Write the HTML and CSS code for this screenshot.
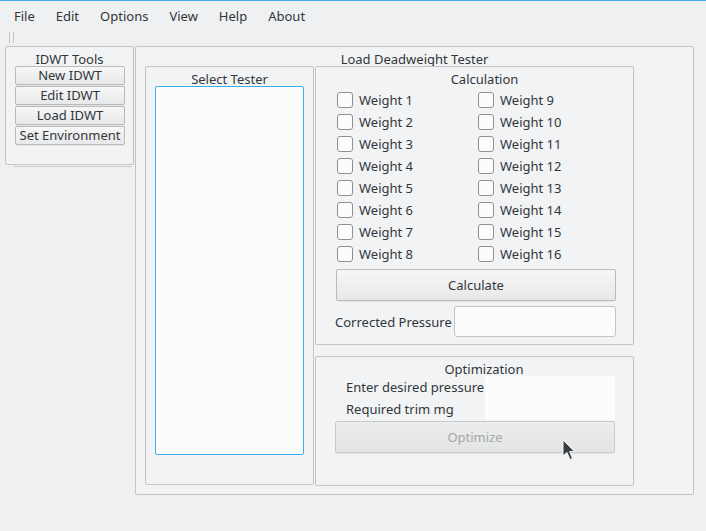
FILE: index.html
```html
<!DOCTYPE html>
<html>
<head>
<meta charset="utf-8">
<link rel="stylesheet" href="styles.css">
</head>
<body>
<div class="window">
  <div class="menubar">
    <span class="menu-item">File</span>
    <span class="menu-item">Edit</span>
    <span class="menu-item">Options</span>
    <span class="menu-item">View</span>
    <span class="menu-item">Help</span>
    <span class="menu-item">About</span>
  </div>
  <div class="toolbar"><span class="handle"></span></div>
  <div class="main">
    <div class="left-col">
      <div class="group tools">
        <div class="group-title">IDWT Tools</div>
        <div class="tool-buttons">
          <button class="btn tool-btn">New IDWT</button>
          <button class="btn tool-btn">Edit IDWT</button>
          <button class="btn tool-btn">Load IDWT</button>
          <button class="btn tool-btn">Set Environment</button>
        </div>
      </div>
      <div class="sep"></div>
    </div>
    <div class="group tester">
      <div class="group-title">Load Deadweight Tester</div>
      <div class="tester-row">
        <div class="group select">
          <div class="group-title">Select Tester</div>
          <div class="list"></div>
        </div>
        <div class="right-col">
          <div class="group calc">
            <div class="group-title">Calculation</div>
            <div class="weights">
              <label class="chk"><span class="box"></span>Weight 1</label>
              <label class="chk"><span class="box"></span>Weight 9</label>
              <label class="chk"><span class="box"></span>Weight 2</label>
              <label class="chk"><span class="box"></span>Weight 10</label>
              <label class="chk"><span class="box"></span>Weight 3</label>
              <label class="chk"><span class="box"></span>Weight 11</label>
              <label class="chk"><span class="box"></span>Weight 4</label>
              <label class="chk"><span class="box"></span>Weight 12</label>
              <label class="chk"><span class="box"></span>Weight 5</label>
              <label class="chk"><span class="box"></span>Weight 13</label>
              <label class="chk"><span class="box"></span>Weight 6</label>
              <label class="chk"><span class="box"></span>Weight 14</label>
              <label class="chk"><span class="box"></span>Weight 7</label>
              <label class="chk"><span class="box"></span>Weight 15</label>
              <label class="chk"><span class="box"></span>Weight 8</label>
              <label class="chk"><span class="box"></span>Weight 16</label>
            </div>
            <button class="btn big-btn calc-btn">Calculate</button>
            <div class="corrected">
              <span class="corr-label">Corrected Pressure</span>
              <span class="input"></span>
            </div>
          </div>
          <div class="group opt">
            <div class="group-title">Optimization</div>
            <div class="opt-form">
              <span class="opt-label">Enter desired pressure</span>
              <span class="opt-field"></span>
              <span class="opt-label">Required trim mg</span>
              <span class="opt-field"></span>
            </div>
            <button class="btn big-btn opt-btn" disabled>Optimize</button>
          </div>
        </div>
      </div>
    </div>
  </div>
  <svg class="cursor" width="14" height="22" viewBox="0 0 14 22">
    <path d="M1 1 L1 17 L5 13.5 L8 20.5 L10.5 19.5 L7.6 12.6 L12.5 12.6 Z" fill="#3a3d40" stroke="#f4f4f4" stroke-width="1" stroke-linejoin="round"/>
  </svg>
</div>
</body>
</html>
```

FILE: styles.css
```css
* {
  box-sizing: border-box;
}

html, body {
  margin: 0;
  padding: 0;
}

body {
  background: #eff0f1;
  font-family: "Noto Sans", "DejaVu Sans", sans-serif;
  font-size: 13px;
  color: #31363b;
  width: 706px;
  height: 531px;
  overflow: hidden;
}

.window {
  position: relative;
  width: 706px;
  height: 531px;
  border-top: 1px solid #3daee9;
}

.menubar {
  display: flex;
  height: 30px;
  line-height: 30px;
  padding-left: 3.5px;
}

.menu-item {
  padding: 0 10.5px;
}

.toolbar {
  height: 15px;
  padding: 1px 0 0 9px;
}

.handle {
  display: block;
  width: 5px;
  height: 11px;
  border-left: 1px solid #c3c4c5;
  border-right: 1px solid #c3c4c5;
}

.main {
  display: flex;
  align-items: flex-start;
  gap: 1px;
  padding-left: 5px;
}

.group {
  border: 1px solid #c3c4c6;
  border-radius: 2px;
  background: #f2f3f4;
}

.group-title {
  text-align: center;
  line-height: 19px;
  padding-top: 3px;
  margin-bottom: -3px;
  white-space: nowrap;
}

.left-col {
  width: 129px;
}

.tools {
  height: 119px;
}

.tool-buttons {
  display: flex;
  flex-direction: column;
  gap: 1px;
  padding-left: 9px;
}

.btn {
  font-family: inherit;
  font-size: 13px;
  color: #31363b;
  border: 1px solid #b9babc;
  border-radius: 2px;
  background: linear-gradient(#f7f7f8, #e7e8e9);
  box-shadow: 0 1px 0 rgba(0, 0, 0, 0.06);
  padding: 0;
  margin: 0;
}

.tool-btn {
  width: 110px;
  height: 19px;
  line-height: 17px;
  white-space: nowrap;
}

.sep {
  height: 1px;
  margin: 1px 0 0 9px;
  width: 118px;
  background: #c9cacb;
}

.tester {
  width: 559px;
  height: 449px;
}

.tester-row {
  display: flex;
  gap: 1px;
  padding-left: 9px;
}

.select {
  width: 169px;
  height: 419px;
}

.list {
  margin: 0 0 0 9px;
  width: 149px;
  height: 369px;
  background: #fcfcfc;
  border: 1px solid #3daee9;
  border-radius: 2px;
}

.right-col {
  display: flex;
  flex-direction: column;
  gap: 11px;
  width: 319px;
}

.calc {
  height: 279px;
  padding-left: 20px;
}

.weights {
  display: grid;
  grid-template-columns: 141px 141px;
  grid-auto-rows: 22px;
  margin-top: 3px;
  padding-left: 1px;
}

.chk {
  display: flex;
  align-items: center;
  gap: 6px;
  line-height: 22px;
  white-space: nowrap;
}

.box {
  display: block;
  width: 16px;
  height: 16px;
  border: 1px solid #8d8f91;
  border-radius: 3px;
  background: #fcfcfc;
}

.big-btn {
  display: block;
  width: 280px;
  height: 32px;
  line-height: 30px;
  text-align: center;
}

.calc-btn {
  margin-top: 4px;
}

.corrected {
  display: flex;
  align-items: center;
  margin-top: 5px;
  margin-left: -1px;
  height: 31px;
}

.corr-label {
  width: 119px;
  white-space: nowrap;
}

.input {
  display: block;
  width: 162px;
  height: 31px;
  background: #fcfcfc;
  border: 1px solid #c3c4c6;
  border-radius: 3px;
}

.opt {
  height: 130px;
  padding-left: 19px;
}

.opt-form {
  display: grid;
  grid-template-columns: 139px 130px;
  grid-auto-rows: 22px;
  margin-top: 0;
  padding-left: 11px;
}

.opt-label {
  line-height: 22px;
  white-space: nowrap;
}

.opt-field {
  background: #fcfcfc;
}

.opt-btn {
  margin-top: 1px;
  color: #a5a7a9;
  background: linear-gradient(#eceded, #e3e4e5);
  border-color: #c8c9cb;
}

.cursor {
  position: absolute;
  left: 562px;
  top: 438px;
}
```
